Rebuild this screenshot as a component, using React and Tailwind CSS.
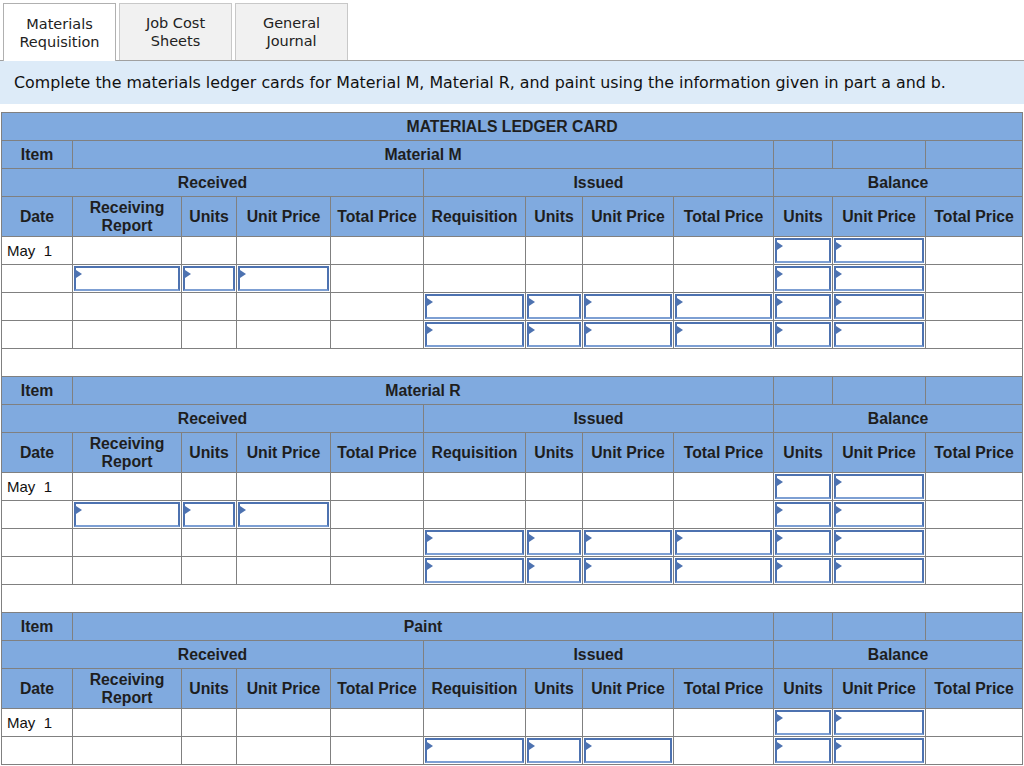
import React from "react";

const COLS = [71, 109, 55, 94, 93, 102, 57, 91, 100, 59, 93, 97];
const HDR = "bg-[#80aadf] border border-[#808080] text-[#1e1e1e] font-bold text-[15.8px] text-center p-0";
const CELL = "border border-[#808080] p-0 bg-white";

function InputBox() {
  return (
    <div className="relative h-[25px] mx-[1px] border-2 border-[#4d72b0] border-b-[#7d9fd3] bg-white">
      <div className="absolute left-0 top-[2px] w-0 h-0 border-t-[4px] border-b-[4px] border-l-[6px] border-t-transparent border-b-transparent border-l-[#4d72b0]" />
    </div>
  );
}

function DataRow({ date, inputs }) {
  return (
    <tr className="h-[28px]">
      {COLS.map((_, i) => (
        <td key={i} className={CELL}>
          {i === 0 && date ? (
            <span className="pl-[5px] text-[15px] text-[#111] whitespace-pre">{date}</span>
          ) : inputs.includes(i) ? (
            <InputBox />
          ) : null}
        </td>
      ))}
    </tr>
  );
}

function Section({ name, rows, first }) {
  return (
    <>
      {!first && (
        <tr className="h-[28px]">
          <td colSpan={12} className={CELL}></td>
        </tr>
      )}
      <tr className="h-[28px]">
        <td className={HDR}>Item</td>
        <td colSpan={8} className={HDR}>{name}</td>
        <td className={HDR}></td>
        <td className={HDR}></td>
        <td className={HDR}></td>
      </tr>
      <tr className="h-[28px]">
        <td colSpan={5} className={HDR}>Received</td>
        <td colSpan={4} className={HDR}>Issued</td>
        <td colSpan={3} className={HDR}>Balance</td>
      </tr>
      <tr className="h-[40px]">
        <td className={HDR}>Date</td>
        <td className={HDR + " leading-[18px]"}>Receiving<br />Report</td>
        <td className={HDR}>Units</td>
        <td className={HDR}>Unit Price</td>
        <td className={HDR}>Total Price</td>
        <td className={HDR}>Requisition</td>
        <td className={HDR}>Units</td>
        <td className={HDR}>Unit Price</td>
        <td className={HDR}>Total Price</td>
        <td className={HDR}>Units</td>
        <td className={HDR}>Unit Price</td>
        <td className={HDR}>Total Price</td>
      </tr>
      {rows.map((r, i) => (
        <DataRow key={i} date={i === 0 ? "May  1" : ""} inputs={r} />
      ))}
    </>
  );
}

const ROWS_MR = [
  [9, 10],
  [1, 2, 3, 9, 10],
  [5, 6, 7, 8, 9, 10],
  [5, 6, 7, 8, 9, 10],
];
const ROWS_P = [
  [9, 10],
  [5, 6, 7, 9, 10],
];

export default function App() {
  return (
    <div className="w-[1024px] bg-white" style={{ fontFamily: '"Liberation Sans", Arial, sans-serif' }}>
      <div className="flex gap-[3px] pl-[3px] pt-[3px] border-b border-[#a0a0a0] h-[61px]" style={{ fontFamily: '"DejaVu Sans", Verdana, sans-serif' }}>
        <div className="w-[113px] h-[58px] bg-white border border-[#b0b0b0] border-b-0 flex items-center justify-center text-center text-[14.5px] leading-[18px] text-[#222] -mb-px relative">
          Materials<br />Requisition
        </div>
        <div className="w-[113px] h-[57px] bg-[#f1f1f1] border border-[#c8c8c8] border-b-0 flex items-center justify-center text-center text-[14.5px] leading-[18px] text-[#222]">
          Job Cost<br />Sheets
        </div>
        <div className="w-[113px] h-[57px] bg-[#f1f1f1] border border-[#c8c8c8] border-b-0 flex items-center justify-center text-center text-[14.5px] leading-[18px] text-[#222]">
          General<br />Journal
        </div>
      </div>
      <div className="h-[43px] bg-[#ddebf8] flex items-center pl-[14px] text-[15.85px] text-[#111]" style={{ fontFamily: '"DejaVu Sans", Verdana, sans-serif' }}>
        Complete the materials ledger cards for Material M, Material R, and paint using the information given in part a and b.
      </div>
      <div className="pt-[8px] pl-[1px]">
        <table className="border-collapse table-fixed w-[1021px]">
          <colgroup>
            {COLS.map((w, i) => (
              <col key={i} style={{ width: w }} />
            ))}
          </colgroup>
          <tbody>
            <tr className="h-[28px]">
              <td colSpan={12} className={HDR}>MATERIALS LEDGER CARD</td>
            </tr>
            <Section name="Material M" rows={ROWS_MR} first />
            <Section name="Material R" rows={ROWS_MR} />
            <Section name="Paint" rows={ROWS_P} />
          </tbody>
        </table>
      </div>
    </div>
  );
}
